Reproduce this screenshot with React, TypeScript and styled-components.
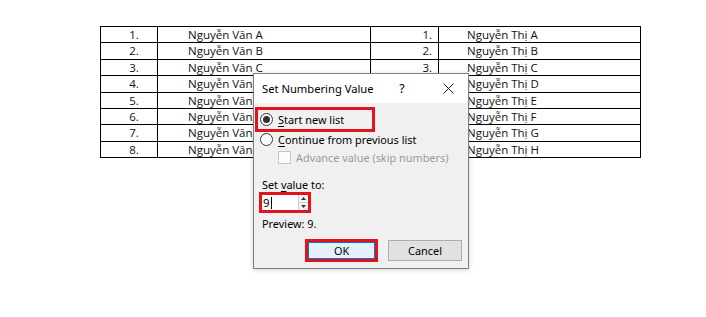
import React from 'react';
import styled, { createGlobalStyle } from 'styled-components';

const GlobalStyle = createGlobalStyle`
  html, body { margin: 0; padding: 0; background: #ffffff; }
  body { width: 706px; height: 317px; overflow: hidden; }
  * { box-sizing: border-box; }
`;

const Page = styled.div`
  position: relative;
  width: 706px;
  height: 317px;
  padding: 26px 0 0 100px;
`;

const Grid = styled.div`
  display: grid;
  grid-template-columns: 57px 213px 68px 202px;
  grid-auto-rows: 16.4px;
  width: 541px;
  border-top: 1px solid #000;
  border-left: 1px solid #000;
`;

type Kind = 'num' | 'name' | 'rnum' | 'rname';

const Cell = styled.div<{ $kind: Kind }>`
  border-right: 1px solid #000;
  border-bottom: 1px solid #000;
  font-family: 'Open Sans', 'Noto Sans', sans-serif;
  font-size: 11.5px;
  line-height: 15.4px;
  color: #111;
  white-space: nowrap;
  overflow: hidden;
  text-align: ${(p) => (p.$kind === 'num' ? 'center' : p.$kind === 'rnum' ? 'right' : 'left')};
  padding: ${(p) =>
    p.$kind === 'num' ? '0 0 0 10px' : p.$kind === 'rnum' ? '0 6px 0 0' : p.$kind === 'rname' ? '0 0 0 28px' : '0 0 0 30px'};
`;

const Dialog = styled.div`
  position: absolute;
  left: 253px;
  top: 73px;
  width: 216px;
  height: 196px;
  border: 1px solid #7f7f7f;
  background: #f0f0f0;
  box-shadow: 0 1px 5px rgba(0, 0, 0, 0.18);
  display: flex;
  flex-direction: column;
  font-family: 'Noto Sans', 'Open Sans', sans-serif;
  font-size: 10.9px;
  color: #000;
`;

const TitleBar = styled.div`
  height: 29px;
  flex: none;
  background: #fff;
  display: flex;
  align-items: center;
  padding-left: 8px;
`;

const Title = styled.span`
  flex: 1;
  font-size: 11.2px;
  white-space: nowrap;
`;

const TitleButton = styled.span<{ $w: number; $mr: number }>`
  width: ${(p) => p.$w}px;
  margin-right: ${(p) => p.$mr}px;
  height: 29px;
  display: flex;
  align-items: center;
  justify-content: center;
  font-size: 12.5px;
`;

const Body = styled.div`
  flex: 1;
  display: flex;
  flex-direction: column;
  align-items: flex-start;
`;

const Highlight = styled.div<{ $w: number; $h: number }>`
  width: ${(p) => p.$w}px;
  height: ${(p) => p.$h}px;
  border: 3px solid #e2131b;
  display: flex;
  align-items: center;
`;

const RadioHighlight = styled(Highlight)`
  margin: 4px 0 0 1px;
  padding-left: 2px;
  gap: 5px;
`;

const Row = styled.div<{ $top: number; $left: number; $h: number }>`
  margin-top: ${(p) => p.$top}px;
  padding-left: ${(p) => p.$left}px;
  height: ${(p) => p.$h}px;
  display: flex;
  align-items: center;
  gap: 5px;
  white-space: nowrap;
`;

const RadioCircle = styled.span<{ $on?: boolean }>`
  width: 13px;
  height: 13px;
  border-radius: 50%;
  border: 1px solid #333;
  background: #fff;
  flex: none;
  display: flex;
  align-items: center;
  justify-content: center;
  &::after {
    content: '';
    width: 7px;
    height: 7px;
    border-radius: 50%;
    background: #333;
    display: ${(p) => (p.$on ? 'block' : 'none')};
  }
`;

const CheckBox = styled.span`
  width: 13px;
  height: 13px;
  border: 1px solid #c6c6c6;
  background: #fcfcfc;
  flex: none;
`;

const Muted = styled.span`
  color: #9b9b9b;
`;

const Key = styled.span`
  text-decoration: underline;
  text-underline-offset: 2px;
`;

const InputHighlight = styled(Highlight)`
  margin-left: 5px;
`;

const Field = styled.div`
  flex: 1;
  height: 100%;
  background: #fff;
  display: flex;
  align-items: center;
  padding-left: 1px;
  font-size: 11.5px;
`;

const Caret = styled.span`
  width: 1px;
  height: 12px;
  background: #000;
  margin-left: 1px;
`;

const Spinner = styled.div`
  margin-left: auto;
  width: 10px;
  height: 100%;
  border-left: 1px solid #d0d0d0;
  display: flex;
  flex-direction: column;
  background: #f4f4f4;
`;

const SpinHalf = styled.div`
  flex: 1;
  display: flex;
  align-items: center;
  justify-content: center;
  & + & { border-top: 1px solid #d0d0d0; }
`;

const ButtonRow = styled.div`
  margin-top: 8px;
  padding-left: 51px;
  display: flex;
  align-items: center;
  gap: 10px;
`;

const OkButton = styled.div`
  flex: 1;
  height: 100%;
  border: 1px solid #0078d7;
  background: #e5f1fb;
  display: flex;
  align-items: center;
  justify-content: center;
`;

const CancelButton = styled.div`
  width: 74px;
  height: 21px;
  border: 1px solid #adadad;
  background: #e1e1e1;
  display: flex;
  align-items: center;
  justify-content: center;
`;

const left = ['Nguyễn Văn A', 'Nguyễn Văn B', 'Nguyễn Văn C', 'Nguyễn Văn D', 'Nguyễn Văn E', 'Nguyễn Văn F', 'Nguyễn Văn G', 'Nguyễn Văn H'];
const right = ['Nguyễn Thị A', 'Nguyễn Thị B', 'Nguyễn Thị C', 'Nguyễn Thị D', 'Nguyễn Thị E', 'Nguyễn Thị F', 'Nguyễn Thị G', 'Nguyễn Thị H'];

export default function App() {
  return (
    <Page>
      <GlobalStyle />
      <Grid>
        {left.map((name, i) => (
          <React.Fragment key={i}>
            <Cell $kind="num">{i + 1}.</Cell>
            <Cell $kind="name">{name}</Cell>
            <Cell $kind="rnum">{i + 1}.</Cell>
            <Cell $kind="rname">{right[i]}</Cell>
          </React.Fragment>
        ))}
      </Grid>

      <Dialog>
        <TitleBar>
          <Title>Set Numbering Value</Title>
          <TitleButton $w={20} $mr={21}>?</TitleButton>
          <TitleButton $w={30} $mr={5}>
            <svg width="11" height="11" viewBox="0 0 11 11">
              <path d="M0.5 0.5 L10.5 10.5 M10.5 0.5 L0.5 10.5" stroke="#222" strokeWidth="1" fill="none" />
            </svg>
          </TitleButton>
        </TitleBar>
        <Body>
          <RadioHighlight $w={120} $h={25}>
            <RadioCircle $on />
            <span>
              <Key>S</Key>tart new list
            </span>
          </RadioHighlight>
          <Row $top={0} $left={6} $h={15}>
            <RadioCircle />
            <span>
              <Key>C</Key>ontinue from previous list
            </span>
          </Row>
          <Row $top={2} $left={24} $h={17}>
            <CheckBox />
            <Muted>Advance value (skip numbers)</Muted>
          </Row>
          <Row $top={11} $left={8} $h={15}>
            <span>
              Set <Key>v</Key>alue to:
            </span>
          </Row>
          <InputHighlight $w={52} $h={21}>
            <Field>
              <span>9</span>
              <Caret />
              <Spinner>
                <SpinHalf>
                  <svg width="5" height="3" viewBox="0 0 5 3"><path d="M0 3 L2.5 0 L5 3 Z" fill="#333" /></svg>
                </SpinHalf>
                <SpinHalf>
                  <svg width="5" height="3" viewBox="0 0 5 3"><path d="M0 0 L2.5 3 L5 0 Z" fill="#333" /></svg>
                </SpinHalf>
              </Spinner>
            </Field>
          </InputHighlight>
          <Row $top={3} $left={8} $h={15}>
            <span>Preview: 9.</span>
          </Row>
          <ButtonRow>
            <Highlight $w={73} $h={23}>
              <OkButton>OK</OkButton>
            </Highlight>
            <CancelButton>Cancel</CancelButton>
          </ButtonRow>
        </Body>
      </Dialog>
    </Page>
  );
}
